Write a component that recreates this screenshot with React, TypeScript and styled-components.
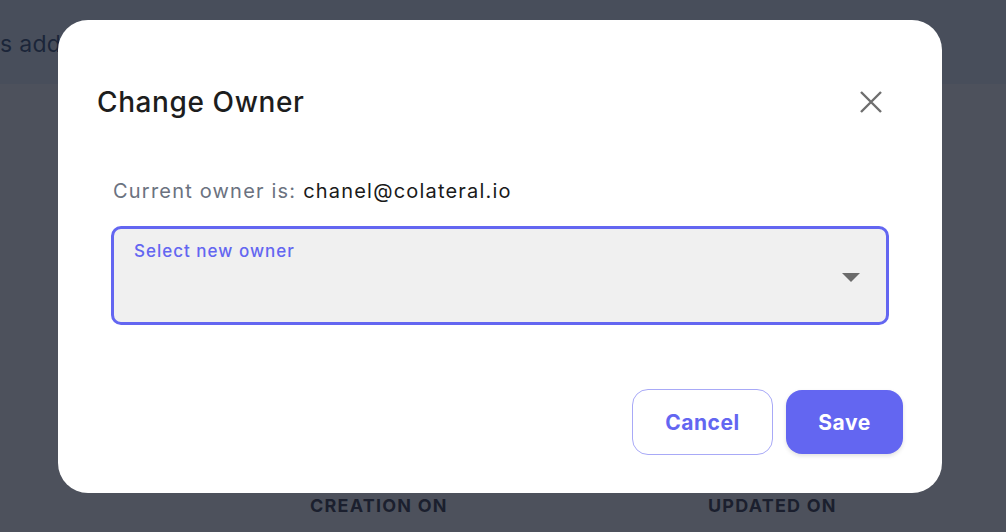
import { createGlobalStyle, styled } from 'styled-components';

const GlobalStyle = createGlobalStyle`
    html, body {
        margin: 0;
        padding: 0;
        width: 1006px;
        height: 532px;
        overflow: hidden;
        font-family: Inter, "Liberation Sans", sans-serif;
    }
`;

function App() {
    return (
        <>
            <GlobalStyle />
            <PageStyle>
                <BannerStyle>s added to the workspace</BannerStyle>
                <TableHeadStyle>
                    <span>Creation on</span>
                    <span>Updated on</span>
                </TableHeadStyle>
            </PageStyle>
            <OverlayStyle>
                <ModalStyle>
                    <ModalHeaderStyle>
                        <h2>Change Owner</h2>
                        <CloseButtonStyle aria-label="close">
                            <svg width="24" height="24" viewBox="0 0 24 24">
                                <path d="M2 2 L22 22 M22 2 L2 22" stroke="#6e6e6e" strokeWidth="2.4" />
                            </svg>
                        </CloseButtonStyle>
                    </ModalHeaderStyle>
                    <ModalBodyStyle>
                        <OwnerTextStyle>
                            Current owner is: <strong>chanel@colateral.io</strong>
                        </OwnerTextStyle>
                        <SelectBoxStyle>
                            <label>Select new owner</label>
                            <svg width="18" height="9" viewBox="0 0 18 9">
                                <path d="M0 0 H18 L9 9 Z" fill="#6b6b6b" />
                            </svg>
                        </SelectBoxStyle>
                    </ModalBodyStyle>
                    <ModalFooterStyle>
                        <ButtonStyle $variant="outline">Cancel</ButtonStyle>
                        <ButtonStyle $variant="primary">Save</ButtonStyle>
                    </ModalFooterStyle>
                </ModalStyle>
            </OverlayStyle>
        </>
    );
}

const PageStyle = styled.div`
    width: 1006px;
    height: 532px;
    background: #fff;
    display: flex;
    flex-direction: column;
    justify-content: space-between;
`;

const BannerStyle = styled.div`
    height: 84px;
    background: #e6f0fb;
    color: #1e3a5f;
    font-size: 23px;
    line-height: 88px;
    letter-spacing: 0.3px;
    white-space: nowrap;
`;

const TableHeadStyle = styled.div`
    height: 54px;
    display: flex;
    align-items: center;
    padding-left: 310px;
    font-family: Inter, sans-serif;
    font-size: 18px;
    font-weight: 700;
    text-transform: uppercase;
    letter-spacing: 1.2px;
    color: #1c1f2e;

    span:first-child {
        width: 398px;
    }
`;

const OverlayStyle = styled.div`
    position: fixed;
    inset: 0;
    background: rgba(27, 32, 46, 0.78);
`;

const ModalStyle = styled.div`
    position: absolute;
    left: 58px;
    top: 20px;
    width: 884px;
    height: 473px;
    box-sizing: border-box;
    background: #fff;
    border-radius: 30px;
    padding: 63px 39px 0 39px;
    display: flex;
    flex-direction: column;
`;

const ModalHeaderStyle = styled.div`
    display: flex;
    align-items: center;
    justify-content: space-between;
    height: 38px;

    h2 {
        margin: 0;
        font-family: Inter, sans-serif;
        font-size: 28px;
        font-weight: 500;
        letter-spacing: 0.6px;
        color: #1d1d1d;
    }
`;

const CloseButtonStyle = styled.button`
    border: 0;
    background: none;
    padding: 0;
    margin-right: 20px;
    width: 24px;
    height: 24px;
    display: flex;
    cursor: pointer;
`;

const ModalBodyStyle = styled.div`
    padding: 0 14px;
    margin-top: 57px;
    display: flex;
    flex-direction: column;
    gap: 22px;
`;

const OwnerTextStyle = styled.p`
    margin: 0 0 0 2px;
    font-size: 20px;
    line-height: 26px;
    letter-spacing: 1.2px;
    color: #6b7280;

    strong {
        font-weight: 400;
        color: #1a1a1a;
    }
`;

const SelectBoxStyle = styled.div`
    position: relative;
    height: 99px;
    box-sizing: border-box;
    border: 3px solid #6366f1;
    border-radius: 10px;
    background: #f0f0f0;
    padding: 12px 20px;

    label {
        display: block;
        font-size: 17px;
        font-weight: 500;
        letter-spacing: 1px;
        color: #6366f1;
    }

    svg {
        position: absolute;
        right: 26px;
        top: 44px;
    }
`;

const ModalFooterStyle = styled.div`
    display: flex;
    justify-content: flex-end;
    gap: 13px;
    margin-top: 64px;
`;

interface ButtonStyleProps {
    $variant: 'outline' | 'primary';
}

const ButtonStyle = styled.button<ButtonStyleProps>`
    height: ${({ $variant }) => ($variant === 'primary' ? '64px' : '66px')};
    margin-top: ${({ $variant }) => ($variant === 'primary' ? '1px' : '0')};
    width: ${({ $variant }) => ($variant === 'primary' ? '117px' : '141px')};
    padding: 0;
    border-radius: 16px;
    font-family: Inter, sans-serif;
    font-size: 21px;
    font-weight: 700;
    letter-spacing: 0.5px;
    cursor: pointer;
    box-sizing: border-box;
    border: ${({ $variant }) => ($variant === 'primary' ? '0' : '1px solid #a8a9f7')};
    background: ${({ $variant }) => ($variant === 'primary' ? '#6366f1' : '#fff')};
    color: ${({ $variant }) => ($variant === 'primary' ? '#fff' : '#6366f1')};
    box-shadow: ${({ $variant }) => ($variant === 'primary' ? '0 2px 4px rgba(0,0,0,0.12)' : 'none')};
`;

export default App;
